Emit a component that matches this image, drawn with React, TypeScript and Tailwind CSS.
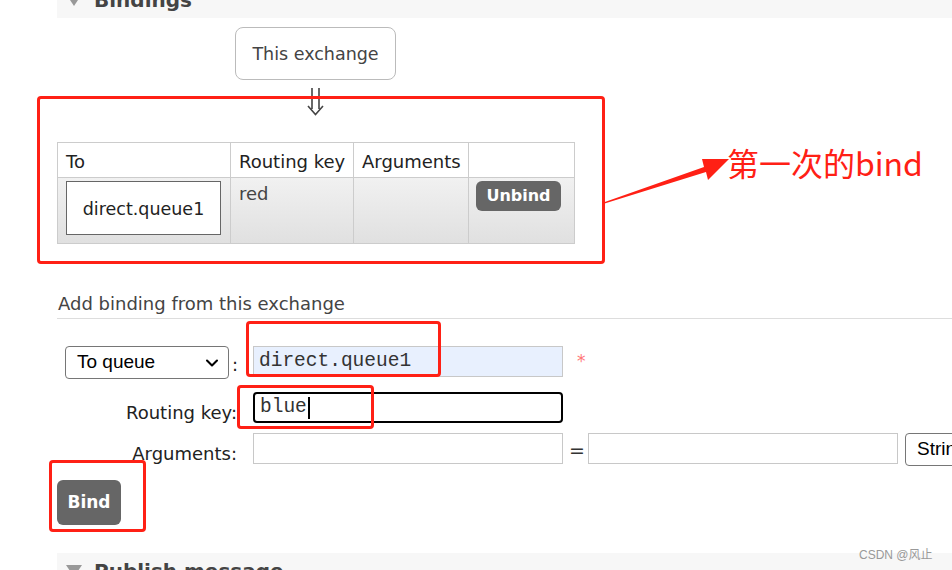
import { ChevronDown } from 'lucide-react'

const FONT = "font-['DejaVu_Sans','Noto_Sans_CJK_SC',sans-serif]"

function RedBox({ className }: { className: string }) {
  return <div className={`pointer-events-none absolute rounded-[4px] border-[3px] border-[#ff2015] ${className}`} />
}

function Field({ className = '', children }: { className?: string; children?: React.ReactNode }) {
  return (
    <div
      className={`flex h-[31px] w-[310px] shrink-0 items-center border border-[#c8c8c8] px-[5px] font-['Liberation_Mono',monospace] text-[19.5px] text-[#333] ${className}`}
    >
      {children}
    </div>
  )
}

function SectionBar({ title, top }: { title: string; top: boolean }) {
  return (
    <div className="ml-[57px] h-[18px] overflow-hidden bg-[#f7f7f7]">
      <div className={`flex items-center gap-[12px] pl-[9px] leading-[24px] ${top ? '-mt-[12px]' : 'mt-[6px]'}`}>
        <svg width="16" height="12" viewBox="0 0 16 12">
          <polygon points="0,0 16,0 8,12" fill="#999" />
        </svg>
        <span className="text-[20px] font-bold text-[#444]">{title}</span>
      </div>
    </div>
  )
}

export default function App() {
  return (
    <div className={`relative h-[570px] w-[952px] overflow-hidden bg-white ${FONT} text-[18px] text-[#222]`}>
      <SectionBar title="Bindings" top />

      <div className="ml-[235px] mt-[9px] flex h-[53px] w-[161px] items-center justify-center rounded-[8px] border border-[#bbb] pt-[2px] text-[17.5px] text-[#444]">
        This exchange
      </div>
      <div className="h-[62px] pl-[307px] pt-[8px]">
        <svg width="17" height="28" viewBox="0 0 17 28" fill="none" stroke="#444" strokeWidth="1.6">
          <path d="M5 0V21M12 0V21M1 18L8.5 26.5L16 18" />
        </svg>
      </div>

      <table className="ml-[57px] w-[518px] border-collapse">
        <thead>
          <tr className="h-[35px] bg-white text-left">
            <th className="w-[173px] border border-[#ccc] pl-[8px] pt-[3px] font-normal">To</th>
            <th className="w-[123px] border border-[#ccc] pl-[8px] pt-[3px] font-normal">Routing key</th>
            <th className="w-[115px] border border-[#ccc] pl-[8px] pt-[3px] font-normal">Arguments</th>
            <th className="border border-[#ccc]" />
          </tr>
        </thead>
        <tbody>
          <tr className="h-[66px] bg-gradient-to-b from-[#f1f1f1] to-[#e0e0e0] align-top">
            <td className="border border-[#ccc] px-[8px] pt-[3px]">
              <div className="flex h-[54px] w-[155px] items-center justify-center border border-[#666] bg-white pt-[2px] text-[17.5px]">
                direct.queue1
              </div>
            </td>
            <td className="border border-[#ccc] pl-[8px] pt-[2px] text-[#444]">red</td>
            <td className="border border-[#ccc]" />
            <td className="border border-[#ccc] pl-[7px] pt-[3px]">
              <div className="flex h-[30px] w-[85px] items-center justify-center rounded-[6px] bg-[#666] text-[16px] font-bold text-white">
                Unbind
              </div>
            </td>
          </tr>
        </tbody>
      </table>

      <div className="ml-[57px] mt-[48px] border-b border-[#ddd] pb-[2px] pl-[1px] leading-[24px] text-[#444]">
        Add binding from this exchange
      </div>

      <div className="ml-[57px] mt-[27px] flex flex-col">
        <div className="flex h-[33px] items-start">
          <div className="flex w-[180px] shrink-0 items-center justify-end">
            <div className="flex h-[33px] w-[164px] items-center justify-between rounded-[4px] border border-[#767676] pl-[11px] pr-[6px] font-['Liberation_Sans',sans-serif] text-[19px] text-black">
              To queue
              <ChevronDown size={20} strokeWidth={2.5} />
            </div>
            <span className="ml-[3px] mt-[4px] w-[5px]">:</span>
          </div>
          <Field className="ml-[16px] bg-[#e8f0fe]">direct.queue1</Field>
          <span className="ml-[14px] mt-[3px] text-[17px] text-[#f77]">*</span>
        </div>

        <div className="mt-[13px] flex h-[31px] items-start">
          <div className="w-[180px] shrink-0 pt-[10px] text-right leading-[22px]">Routing key:</div>
          <Field className="ml-[16px] rounded-[4px] border-2 border-black">
            blue
            <span className="ml-[1px] h-[22px] w-[2px] bg-black" />
          </Field>
        </div>

        <div className="mt-[10px] flex h-[33px] items-start">
          <div className="w-[180px] shrink-0 pt-[10px] text-right leading-[22px]">Arguments:</div>
          <Field className="ml-[16px] w-[309px]" />
          <span className="mx-[6px] mt-[3px] w-[13px] shrink-0 text-center text-[19px] text-[#333]">=</span>
          <Field className="w-[310px]" />
          <div className="ml-[7px] flex h-[33px] w-[80px] shrink-0 items-center rounded-[4px] border border-[#767676] pl-[11px] font-['Liberation_Sans',sans-serif] text-[19px] text-black">
            String
          </div>
        </div>

        <div className="mt-[14px] flex h-[45px] w-[64px] items-center justify-center rounded-[6px] bg-[#666] text-[17px] font-bold text-white">
          Bind
        </div>
      </div>

      <div className="mt-[28px]">
        <SectionBar title="Publish message" top={false} />
      </div>

      {/* annotations */}
      <RedBox className="left-[37px] top-[96px] h-[168px] w-[568px] border-4" />
      <RedBox className="left-[246px] top-[321px] h-[56px] w-[195px]" />
      <RedBox className="left-[237px] top-[385px] h-[44px] w-[137px]" />
      <RedBox className="left-[49px] top-[460px] h-[72px] w-[97px]" />

      <svg className="absolute left-[598px] top-[148px]" width="134" height="60" viewBox="0 0 134 60">
        <polygon points="4,55 106,19 104,11 131,11 110,32 108,24 5,56" fill="#ff2015" />
      </svg>
      <div className="absolute left-[727px] top-[140px] font-['Noto_Sans_CJK_SC',sans-serif] text-[32px] leading-[44px] text-[#ff2015]">
        第一次的bind
      </div>

      <div className="absolute left-[859px] top-[546px] font-['Liberation_Sans','Noto_Sans_CJK_SC',sans-serif] text-[12px] text-[#999]">
        CSDN @风止
      </div>
    </div>
  )
}
